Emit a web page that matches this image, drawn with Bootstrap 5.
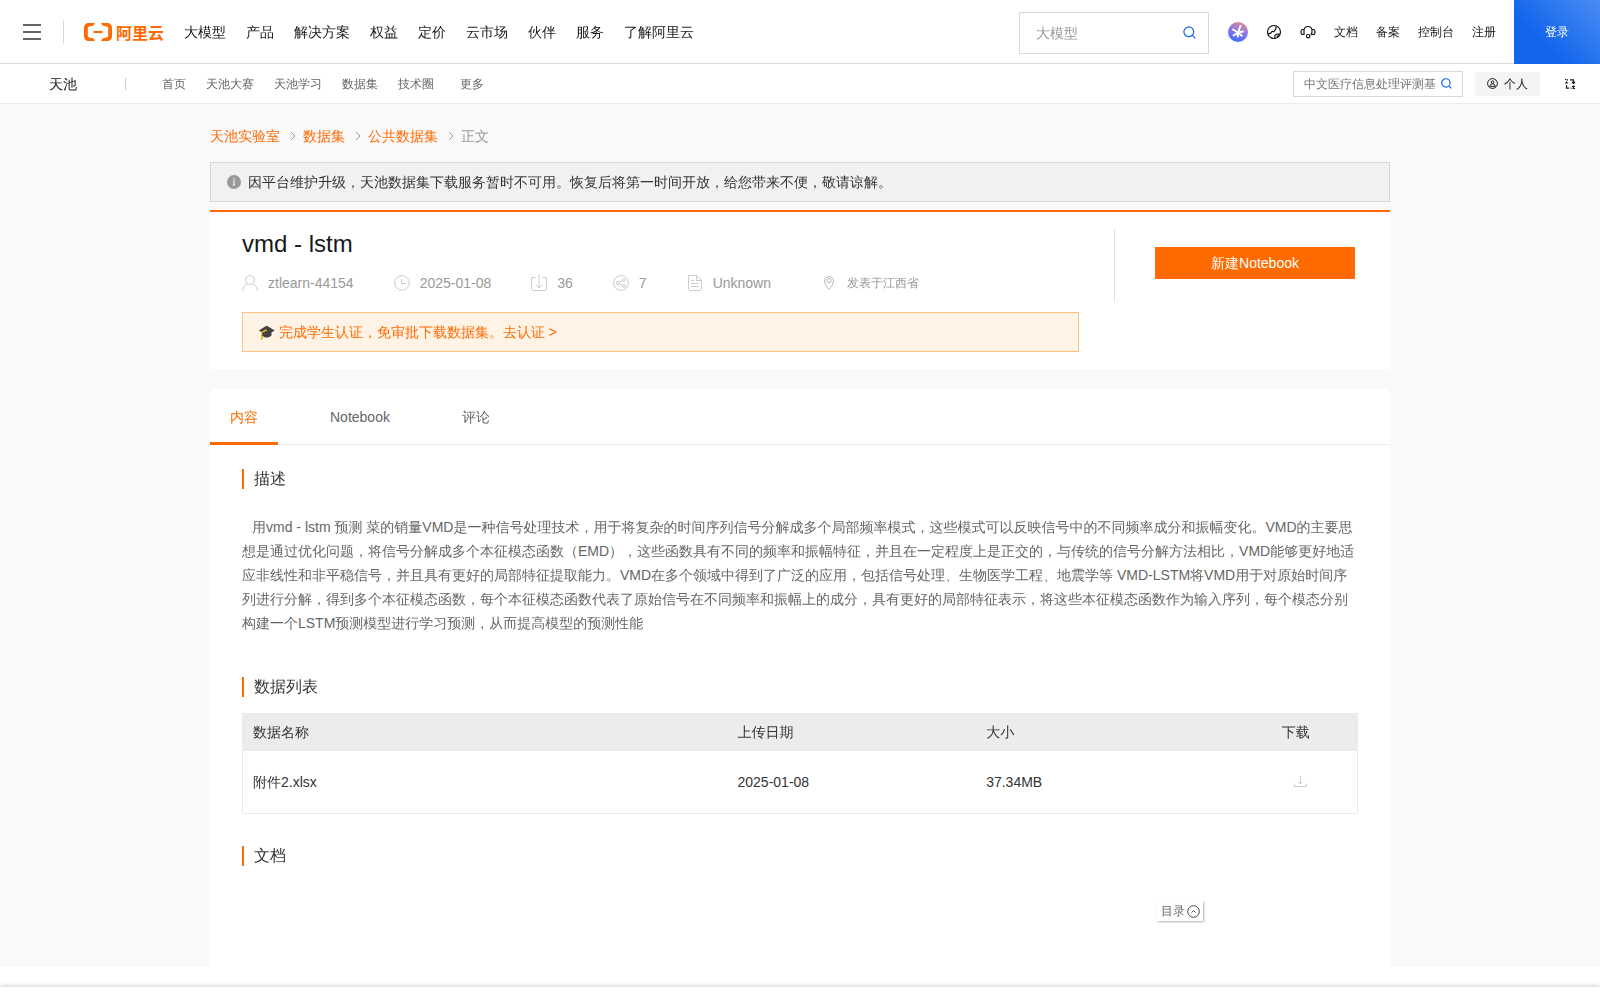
<!DOCTYPE html>
<html lang="zh-CN">
<head>
<meta charset="utf-8">
<meta name="viewport" content="width=device-width, initial-scale=1">
<title>vmd - lstm</title>
<link rel="stylesheet" href="https://cdn.jsdelivr.net/npm/bootstrap@5.3.0/dist/css/bootstrap.min.css">
<style>
  :root { --tc-orange: #ff6a00; --tc-line: #d9d9d9; }
  body { font-family: "Liberation Sans", "WenQuanYi Zen Hei", "Noto Sans CJK SC", sans-serif; font-size: 14px; line-height: 20px; color: #333; background: #fff; }
  a { color: inherit; text-decoration: none; }
  svg { display: block; flex: none; }
  h1, h2 { font-weight: 400; margin: 0; }
  button { border: 0; padding: 0; background: none; color: inherit; }

  .top-bar { height: 64px; border-bottom: 1px solid var(--tc-line); color: #181818; }
  .menu-btn { height: 24px; padding: 0 22px; border-right: 1px solid var(--tc-line); color: #666; }
  .brand-logo { margin: 0 20px; gap: 4px; color: var(--tc-orange); font: 700 16px/20px "Noto Sans CJK SC", sans-serif; }
  .main-nav { gap: 20px; }
  .plain-input { border: 0; outline: 0; padding: 0; background: none; min-width: 0; flex: 1; }
  .plain-input::placeholder { color: #999; opacity: 1; }
  .top-search { width: 190px; height: 42px; border: 1px solid var(--tc-line); padding: 0 12px 0 16px; margin: 2px 19px 0 0; }
  .tools { gap: 18px; font-size: 12px; padding-right: 18px; }
  .login-btn { width: 86px; height: 64px; margin-bottom: -1px; font-size: 12px; color: #fff; background: linear-gradient(225deg, #4b8cf3 0%, #1366ec 65%); }

  .sub-bar { height: 40px; border-bottom: 1px solid #ebebeb; font-size: 12px; color: #666; }
  .sub-brand { font-size: 14px; color: #181818; padding: 0 48px 0 49px; }
  .sub-rule { width: 1px; height: 12px; background: #ccc; margin-right: 36px; }
  .sub-nav { gap: 20px; }
  .more-link { padding-left: 6px; }
  .sub-search { width: 170px; height: 26px; border: 1px solid var(--tc-line); padding: 0 10px; gap: 4px; margin-right: 12px; }
  .sub-search .plain-input::placeholder { color: #777; }
  .me-btn { height: 24px; padding: 0 12px; gap: 6px; background: #f4f4f4; color: #181818; margin-right: 24px; }
  .swap-btn { color: #181818; margin-right: 24px; }

  .page-area { background: #f9f9f9; }
  .tc-wrap { max-width: 1180px; margin: 0 auto; }
  .crumbs { padding: 22px 0 16px; color: #999; }
  .crumbs svg { margin: 0 7px 0 10px; }
  .crumbs a { color: var(--tc-orange); }
  .notice-bar { height: 40px; border: 1px solid var(--tc-line); background: #f1f1f1; padding: 0 16px; gap: 7px; }
  .head-box { background: #fff; border-top: 2px solid var(--tc-orange); margin-top: 8px; padding: 16px 0 17px 32px; }
  .head-box h1 { font-size: 24px; line-height: 32px; color: #181818; }
  .meta-row { color: #999; margin: 13px 0 19px; gap: 40px; height: 20px; }
  .meta-item { gap: 10px; }
  .meta-row svg { color: #ccc; }
  .post-from { font-size: 12px; gap: 11px; padding-left: 11px; }
  .student-tip { height: 40px; border: 1px solid #ffc081; background: #fff3e6; padding: 0 15px; color: var(--tc-orange); }
  .head-side { width: 276px; height: 73px; margin: 1px 0 0 35px; border-left: 1px solid #e0e0e0; padding: 18px 35px 0 40px; }
  .nb-btn { height: 32px; background: var(--tc-orange); color: #fff; }

  .content-box { background: #fff; margin-top: 20px; }
  .tab-row { gap: 32px; border-bottom: 1px solid #ebebeb; color: #666; }
  .tab-row a { padding: 18px 20px 15px; }
  .tab-row a.on { color: var(--tc-orange); border-bottom: 3px solid var(--tc-orange); margin-bottom: -1px; }
  .tab-body { padding: 24px 32px 101px; }
  .sec-title { font-size: 16px; line-height: 20px; border-left: 2px solid var(--tc-orange); padding-left: 10px; }
  .desc-text { line-height: 24px; color: #666; margin: 26px 0 42px; text-indent: 10px; }
  .file-table { margin: 16px 0 32px; table-layout: fixed; width: 100%; border: 1px solid #ebebeb; }
  .file-table th, .file-table td { font-weight: 400; padding: 0 10px; border-bottom: 1px solid #ebebeb; }
  .file-table th { background: #ececec; height: 37px; }
  .file-table td { height: 63px; }
  .dl-btn { display: block; color: #ccc; padding-left: 12px; }
  .toc-btn { right: 187px; bottom: 46px; height: 20px; padding: 0 3px 0 4px; gap: 2px; font-size: 12px; color: #666; background: #fff; box-shadow: 1px 1px 2px rgba(0,0,0,.3); }
  .bottom-dock { height: 14px; margin-top: 20px; background: #fff; box-shadow: 0 -1px 4px rgba(0,0,0,.2); }
</style>
<script src="https://cdn.jsdelivr.net/npm/bootstrap@5.3.0/dist/js/bootstrap.bundle.min.js"></script>
</head>
<body>
<header>
  <div class="top-bar d-flex align-items-center text-nowrap">
    <button class="menu-btn d-flex align-items-center" type="button" aria-label="菜单">
      <svg width="19" height="16" viewBox="0 0 19 16"><path d="M1 1h18M1 8h18M1 15h18" stroke="currentColor" stroke-width="2"/></svg>
    </button>
    <a class="brand-logo d-flex align-items-center" href="#">
      <svg width="28" height="18" viewBox="0 0 28 18" fill="currentColor"><path d="M11 0H5C2 0 0 2 0 5v8c0 3 2 5 5 5h6l-1.400-2.400-4.400-1.200c-1-.2-1.400-.8-1.400-1.700V5.300c0-.9.4-1.500 1.400-1.700l4.400-1.200zM17 0h6c3 0 5 2 5 5v8c0 3-2 5-5 5h-6l1.400-2.400 4.400-1.200c1-.2 1.400-.8 1.400-1.700V5.300c0-.9-.4-1.500-1.400-1.700l-4.400-1.200zM9.500 8h9v2h-9z"/></svg>
      <span>阿里云</span>
    </a>
    <nav class="main-nav d-flex">
      <a href="#">大模型</a><a href="#">产品</a><a href="#">解决方案</a><a href="#">权益</a><a href="#">定价</a><a href="#">云市场</a><a href="#">伙伴</a><a href="#">服务</a><a href="#">了解阿里云</a>
    </nav>
    <label class="top-search d-flex align-items-center ms-auto">
      <input class="plain-input" type="text" placeholder="大模型" aria-label="搜索">
      <svg width="13" height="13" viewBox="0 0 13 13" fill="none" stroke="#1366ec" stroke-width="1.200"><circle cx="5.800" cy="5.800" r="4.900"/><path d="M9.300 9.300l3 3"/></svg>
    </label>
    <div class="tools d-flex align-items-center">
      <a href="#" aria-label="AI 助理">
        <svg width="20" height="20" viewBox="0 0 20 20"><defs><linearGradient id="aiFill" x1=".75" y1="0" x2=".4" y2="1"><stop offset="0" stop-color="#e58a96"/><stop offset=".5" stop-color="#8f74e8"/><stop offset="1" stop-color="#3a6bff"/></linearGradient></defs><circle cx="10" cy="10" r="10" fill="url(#aiFill)"/><path d="M12.500 4L10 10.500M5 7.500L10 10.500M15 9.500L10 10.500M5.500 13.500L10 10.500M9.800 10.500V14.500M10 10.500l3.800 3.200" stroke="#fff" stroke-width="2" stroke-linecap="round"/></svg>
      </a>
      <a href="#" aria-label="语言">
        <svg width="16" height="16" viewBox="0 0 16 16" fill="none" stroke="currentColor" stroke-width="1.200"><circle cx="8" cy="8" r="6.500"/><path d="M2 9.800l2.800-.6 1.400-2 1.600.6 2-2.600.4-3M9 14.300l-.2-2.500 1.700-1.800h3.300M11 13.500l1.500-3"/></svg>
      </a>
      <a href="#" aria-label="支持">
        <svg width="16" height="16" viewBox="0 0 16 16" fill="none" stroke="currentColor" stroke-width="1.200"><path d="M4 5.500v5H2.500C1.500 10.500 1 9.500 1 8s.5-2.500 1.500-2.500zM12 5.500c.3 2.500 0 4-1 5.500M12 5.500h1.500c1 0 1.500 1 1.500 2.500s-.5 2.500-1.500 2.500h-1.700M4 6c.3-2.300 1.800-3.500 4-3.500S11.700 3.700 12 6"/><circle cx="8.200" cy="12.200" r="1.700"/></svg>
      </a>
      <a href="#">文档</a><a href="#">备案</a><a href="#">控制台</a><a href="#">注册</a>
    </div>
    <a class="login-btn d-flex align-items-center justify-content-center" href="#">登录</a>
  </div>
  <div class="sub-bar d-flex align-items-center text-nowrap">
    <a class="sub-brand" href="#">天池</a>
    <span class="sub-rule"></span>
    <nav class="sub-nav d-flex">
      <a href="#">首页</a><a href="#">天池大赛</a><a href="#">天池学习</a><a href="#">数据集</a><a href="#">技术圈</a><a class="more-link" href="#">更多</a>
    </nav>
    <label class="sub-search d-flex align-items-center ms-auto">
      <input class="plain-input" type="text" placeholder="中文医疗信息处理评测基" aria-label="站内搜索">
      <svg width="11" height="11" viewBox="0 0 13 13" fill="none" stroke="#1366ec" stroke-width="1.400"><circle cx="5.800" cy="5.800" r="4.900"/><path d="M9.300 9.300l3 3"/></svg>
    </label>
    <button class="me-btn d-flex align-items-center" type="button">
      <svg width="11" height="11" viewBox="0 0 11 11" fill="none" stroke="currentColor"><circle cx="5.500" cy="5.500" r="4.900"/><circle cx="5.500" cy="4.200" r="1.300"/><path d="M2.800 8.300c.3-1.700 1.300-2.500 2.700-2.500s2.400.8 2.700 2.500z"/></svg>个人
    </button>
    <button class="swap-btn" type="button" aria-label="切换">
      <svg width="12" height="12" viewBox="0 0 12 12" fill="none" stroke="currentColor" stroke-width="1.200"><path d="M4 1.800H2.500M2.500 3.500v1.500M1 5h3M6 1.800h3.500V5M8 4l1.500 1.500L11 4M2.500 7v3.200H5M1 1.500h1M6.500 10.200h1M9.500 10.200V7.500M8 8.500h3M8.500 10.500h2.500"/></svg>
    </button>
  </div>
</header>

<main class="page-area">
  <div class="tc-wrap">
    <nav class="crumbs d-flex align-items-center" aria-label="breadcrumb">
      <a href="#">天池实验室</a>
      <svg width="6" height="10" viewBox="0 0 6 10" fill="none" stroke="#999"><path d="M1 1l4 4-4 4"/></svg>
      <a href="#">数据集</a>
      <svg width="6" height="10" viewBox="0 0 6 10" fill="none" stroke="#999"><path d="M1 1l4 4-4 4"/></svg>
      <a href="#">公共数据集</a>
      <svg width="6" height="10" viewBox="0 0 6 10" fill="none" stroke="#999"><path d="M1 1l4 4-4 4"/></svg>
      <span>正文</span>
    </nav>
    <div class="notice-bar d-flex align-items-center" role="alert">
      <svg width="14" height="14" viewBox="0 0 14 14"><circle cx="7" cy="7" r="7" fill="#999"/><path d="M7 3v1.600M6 6h1v4M5.800 10h2.500" fill="none" stroke="#f1f1f1" stroke-width="1.200"/></svg>
      <span>因平台维护升级，天池数据集下载服务暂时不可用。恢复后将第一时间开放，给您带来不便，敬请谅解。</span>
    </div>

    <section class="head-box d-flex">
      <div class="flex-grow-1">
        <h1>vmd - lstm</h1>
        <div class="meta-row d-flex align-items-center text-nowrap">
          <span class="meta-item d-flex align-items-center">
            <svg width="16" height="16" viewBox="0 0 16 16" fill="none" stroke="currentColor"><circle cx="8" cy="5" r="4.400"/><path d="M.6 16c.2-4 2.400-6.300 5-6.900M15.400 16c-.2-4-2.400-6.300-5-6.900"/></svg>ztlearn-44154</span>
          <span class="meta-item d-flex align-items-center">
            <svg width="16" height="16" viewBox="0 0 16 16" fill="none" stroke="currentColor"><circle cx="8" cy="8" r="7.300"/><path d="M7.500 3.500v5h4.500"/></svg>2025-01-08</span>
          <span class="meta-item d-flex align-items-center">
            <svg width="16" height="16" viewBox="0 0 16 16" fill="none" stroke="currentColor"><path d="M4.500 2.500h-4v12l1 1h13l1-1v-12h-4M8 0v12.500M4.500 9.500L8 13l3.500-3.500"/></svg>36</span>
          <span class="meta-item d-flex align-items-center">
            <svg width="16" height="16" viewBox="0 0 16 16" fill="none" stroke="currentColor"><circle cx="8" cy="8" r="7.400"/><circle cx="5" cy="8" r="1.600"/><circle cx="10.800" cy="5" r="1.200"/><circle cx="11" cy="11" r="1.400"/><path d="M6.400 7.200l3.300-1.700M6.400 8.800l3.300 1.600"/></svg>7</span>
          <span class="meta-item d-flex align-items-center">
            <svg width="16" height="16" viewBox="0 0 16 16" fill="none" stroke="currentColor"><path d="M1.500.5h8l5 5v9l-1 1h-11l-1-1v-13zM9.500.5v5h5M4 5.500h3M4 8.500h8M4 11.500h8"/></svg>Unknown</span>
          <span class="post-from d-flex align-items-center">
            <svg width="14" height="14" viewBox="0 0 14 14" fill="none" stroke="#b4bcb6"><path d="M7 13.500C4.500 10.800 2.500 7.500 2.500 5a4.500 4.500 0 0 1 9 0c0 2.500-2 5.800-4.500 8.500z"/><circle cx="7" cy="4.500" r="2.200"/></svg>发表于江西省</span>
        </div>
        <a class="student-tip d-flex align-items-center" href="#">🎓 完成学生认证，免审批下载数据集。去认证 &gt;</a>
      </div>
      <div class="head-side flex-shrink-0">
        <button class="nb-btn w-100" type="button">新建Notebook</button>
      </div>
    </section>

    <section class="content-box position-relative">
      <nav class="tab-row d-flex">
        <a class="on" href="#">内容</a><a href="#">Notebook</a><a href="#">评论</a>
      </nav>
      <div class="tab-body">
        <h2 class="sec-title">描述</h2>
        <p class="desc-text">用vmd - lstm 预测 菜的销量VMD是一种信号处理技术，用于将复杂的时间序列信号分解成多个局部频率模式，这些模式可以反映信号中的不同频率成分和振幅变化。VMD的主要思想是通过优化问题，将信号分解成多个本征模态函数（EMD），这些函数具有不同的频率和振幅特征，并且在一定程度上是正交的，与传统的信号分解方法相比，VMD能够更好地适应非线性和非平稳信号，并且具有更好的局部特征提取能力。VMD在多个领域中得到了广泛的应用，包括信号处理、生物医学工程、地震学等 VMD-LSTM将VMD用于对原始时间序列进行分解，得到多个本征模态函数，每个本征模态函数代表了原始信号在不同频率和振幅上的成分，具有更好的局部特征表示，将这些本征模态函数作为输入序列，每个模态分别构建一个LSTM预测模型进行学习预测，从而提高模型的预测性能</p>
        <h2 class="sec-title">数据列表</h2>
        <table class="file-table">
          <colgroup><col style="width:43.5%"><col style="width:22.3%"><col style="width:26.5%"><col></colgroup>
          <thead><tr><th scope="col">数据名称</th><th scope="col">上传日期</th><th scope="col">大小</th><th scope="col">下载</th></tr></thead>
          <tbody><tr><td>附件2.xlsx</td><td>2025-01-08</td><td>37.34MB</td><td>
            <button class="dl-btn" type="button" aria-label="下载"><svg width="13" height="12" viewBox="0 0 13 12" fill="none" stroke="currentColor"><path d="M6.500 0v7M4.500 6l2 2 2-2M.5 7.500v3h12v-3"/></svg></button>
          </td></tr></tbody>
        </table>
        <h2 class="sec-title">文档</h2>
      </div>
      <button class="toc-btn d-flex align-items-center position-absolute" type="button">目录
        <svg width="13" height="13" viewBox="0 0 13 13" fill="none" stroke="#444"><circle cx="6.500" cy="6.500" r="5.800"/><path d="M4.500 7.500l2-2 2 2"/></svg>
      </button>
    </section>
  </div>
</main>
<footer class="bottom-dock"></footer>
</body>
</html>
